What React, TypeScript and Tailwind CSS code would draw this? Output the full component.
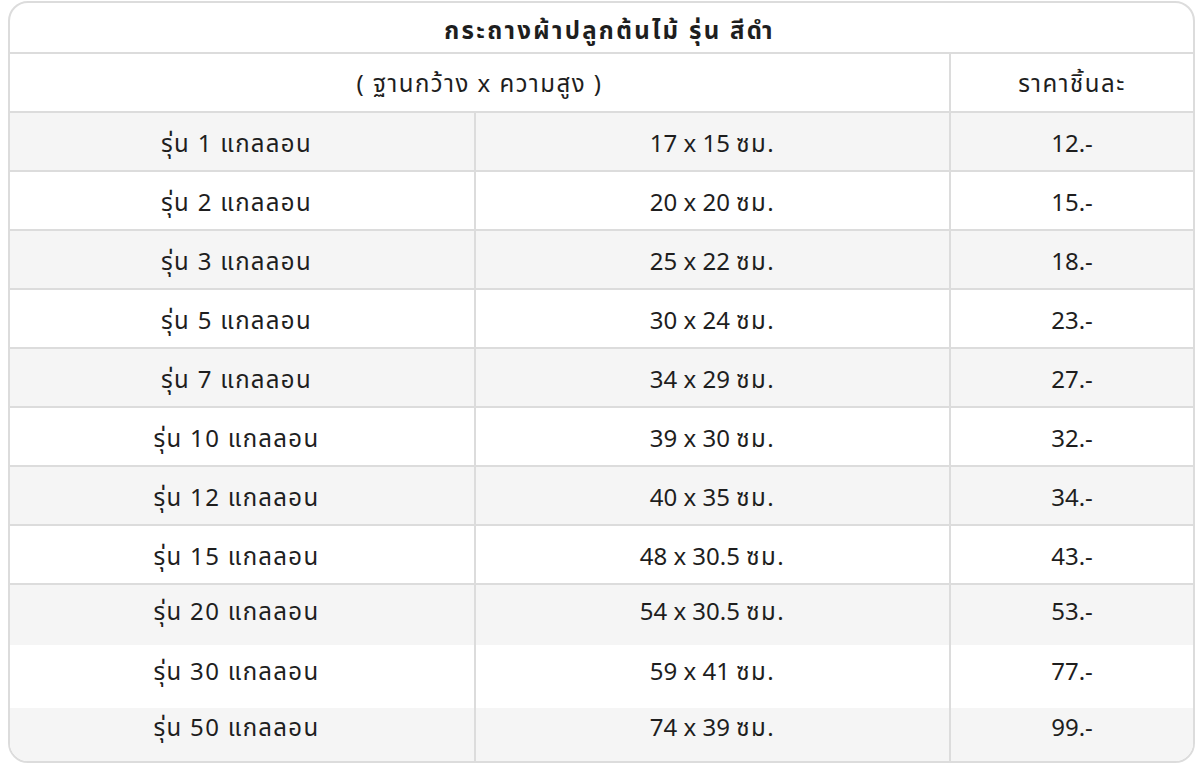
import React from "react";

const rows = [
  { name: "รุ่น 1 แกลลอน", size: "17 x 15", price: "12.-" },
  { name: "รุ่น 2 แกลลอน", size: "20 x 20", price: "15.-" },
  { name: "รุ่น 3 แกลลอน", size: "25 x 22", price: "18.-" },
  { name: "รุ่น 5 แกลลอน", size: "30 x 24", price: "23.-" },
  { name: "รุ่น 7 แกลลอน", size: "34 x 29", price: "27.-" },
  { name: "รุ่น 10 แกลลอน", size: "39 x 30", price: "32.-" },
  { name: "รุ่น 12 แกลลอน", size: "40 x 35", price: "34.-" },
  { name: "รุ่น 15 แกลลอน", size: "48 x 30.5", price: "43.-" },
  { name: "รุ่น 20 แกลลอน", size: "54 x 30.5", price: "53.-" },
  { name: "รุ่น 30 แกลลอน", size: "59 x 41", price: "77.-" },
  { name: "รุ่น 50 แกลลอน", size: "74 x 39", price: "99.-" },
];

const rowClass = [
  "h-[59px] border-b-2",
  "h-[59px] border-b-2",
  "h-[59px] border-b-2",
  "h-[59px] border-b-2",
  "h-[59px] border-b-2",
  "h-[59px] border-b-2",
  "h-[59px] border-b-2",
  "h-[59px] border-b-2",
  "h-[60px]",
  "h-[63px]",
  "h-[53px]",
];

const padClass = [
  "pt-[14px]",
  "pt-[14px]",
  "pt-[14px]",
  "pt-[14px]",
  "pt-[14px]",
  "pt-[14px]",
  "pt-[14px]",
  "pt-[14px]",
  "pt-[10px]",
  "pt-[10px]",
  "pt-[3px]",
];

export default function App() {
  return (
    <div className="w-[1200px] h-[779px] bg-white" style={{ fontFamily: '"Noto Sans", "Noto Sans Thai", sans-serif' }}>
      <div className="ml-[8px] mt-[1px] w-[1187px] border-2 border-[#dcdcdc] rounded-[20px] overflow-hidden text-[#1e1e1e] text-[24px] leading-[32px]">
        <div className="h-[51px] border-b-2 border-[#dcdcdc] flex items-center justify-center pl-[16px] pt-[4px] font-bold text-[24px] tracking-[2.3px]">
          กระถางผ้าปลูกต้นไม้ รุ่น สีดำ
        </div>
        <div className="h-[59px] border-b-2 border-[#dcdcdc] flex">
          <div className="w-[941px] border-r-2 border-[#dcdcdc] flex items-center justify-center tracking-[1.5px]">
            ( ฐานกว้าง x ความสูง )
          </div>
          <div className="flex-1 flex items-center justify-center tracking-[1.5px]">ราคาชิ้นละ</div>
        </div>
        {rows.map((r, i) => (
          <div
            key={i}
            className={`flex border-[#dcdcdc] ${rowClass[i]} ${i % 2 === 0 ? "bg-[#f5f5f5]" : "bg-white"}`}
          >
            <div className={`w-[466px] border-r-2 border-[#dcdcdc] flex justify-center pr-[11px] tracking-[1.3px] ${padClass[i]}`}>
              <span>{r.name}</span>
            </div>
            <div className={`w-[475px] border-r-2 border-[#dcdcdc] flex justify-center ${padClass[i]}`}>
              <span>
                {r.size} <span className="tracking-[1.5px]">ซม.</span>
              </span>
            </div>
            <div className={`flex-1 flex justify-center ${padClass[i]}`}>{r.price}</div>
          </div>
        ))}
      </div>
    </div>
  );
}
